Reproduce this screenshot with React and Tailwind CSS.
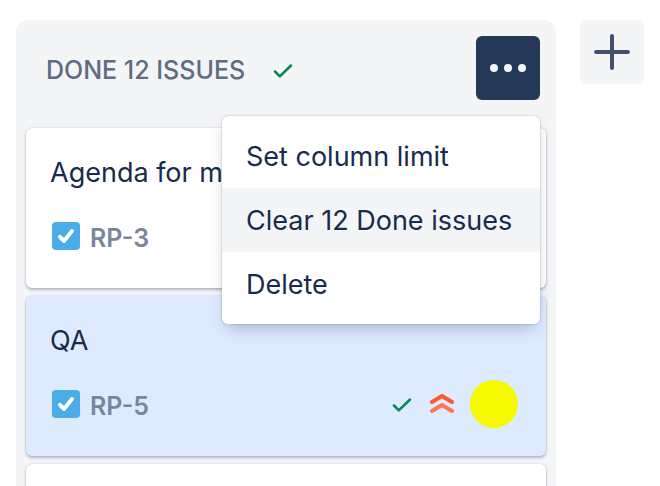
import clsx from 'clsx';

const ISSUES = [
  { key: 'RP-3', title: 'Agenda for m' },
  { key: 'RP-5', title: 'QA', selected: true, done: true },
];

const MENU_ITEMS = [
  { label: 'Set column limit' },
  { label: 'Clear 12 Done issues', active: true },
  { label: 'Delete' },
];

const CARD = 'rounded-md shadow-[0_2px_3px_rgba(9,30,66,0.25),0_0_2px_rgba(9,30,66,0.2)]';

function DoneIcon() {
  return (
    <svg width="20" height="18" viewBox="0 0 20 18" fill="none" aria-hidden="true" className="shrink-0">
      <path d="M2 10.5 6.8 15.3 18 4.5" stroke="#00875A" strokeWidth="2.5" strokeLinecap="round" strokeLinejoin="round" />
    </svg>
  );
}

function TaskIcon() {
  return (
    <svg width="28" height="28" viewBox="0 0 28 28" fill="none" aria-hidden="true" className="shrink-0">
      <rect width="28" height="28" rx="4" fill="#4BADE8" />
      <path d="M8 14.8 12 19 20 9" stroke="#fff" strokeWidth="4" strokeLinecap="round" strokeLinejoin="round" />
    </svg>
  );
}

function HighestIcon() {
  return (
    <svg width="24" height="20" viewBox="0 0 24 20" fill="none" aria-hidden="true" className="shrink-0">
      <path d="M2 8 12 2 22 8" stroke="#FF5630" strokeWidth="4" strokeLinecap="round" strokeLinejoin="round" />
      <path d="M2 17 12 11 22 17" stroke="#FF7452" strokeWidth="4" strokeLinecap="round" strokeLinejoin="round" />
    </svg>
  );
}

function ColumnMenu() {
  return (
    <div className="relative ml-auto shrink-0">
      <button type="button" aria-label="Column actions" aria-haspopup="menu" className="flex size-16 items-center justify-center rounded-md bg-[#253858]">
        <svg width="36" height="8" viewBox="0 0 36 8" fill="#F4F5F7" aria-hidden="true">
          <circle cx="4" cy="4" r="4" />
          <circle cx="18" cy="4" r="4" />
          <circle cx="32" cy="4" r="4" />
        </svg>
      </button>
      <div role="menu" className="absolute top-full right-0 z-10 mt-4 w-[318px] rounded-md bg-white py-2 shadow-[0_8px_16px_-4px_rgba(9,30,66,0.25),0_0_2px_rgba(9,30,66,0.31)]">
        {MENU_ITEMS.map((item) => (
          <button
            key={item.label}
            type="button"
            role="menuitem"
            className={clsx('block h-16 w-full px-6 pt-0.5 text-left text-[27px] whitespace-nowrap hover:bg-[#F4F5F7]', item.active && 'bg-[#F4F5F7]')}
          >
            {item.label}
          </button>
        ))}
      </div>
    </div>
  );
}

function IssueCard({ issue }) {
  return (
    <li className={clsx(CARD, 'px-6 pt-6 pb-7', issue.selected ? 'bg-[#DEEBFF]' : 'bg-white')}>
      <p className="text-[27px] leading-[42px]">{issue.title}</p>
      <div className="mt-[18px] flex h-12 items-center pr-1 pl-0.5">
        <TaskIcon />
        <span className="ml-2.5 pt-1 text-[25px] leading-8 font-semibold text-[#7A869A]">{issue.key}</span>
        {issue.done && (
          <div className="ml-auto flex items-center">
            <DoneIcon />
            <div className="ml-[18px] flex items-center gap-4">
              <HighestIcon />
              <span role="img" aria-label="Assignee" className="size-12 rounded-full bg-[#F5F900]" />
            </div>
          </div>
        )}
      </div>
    </li>
  );
}

export default function App() {
  return (
    <main className="flex h-screen items-start gap-6 overflow-hidden bg-white px-4 pt-5 font-['Inter','Liberation_Sans',sans-serif] text-[#172B4D]">
      <section className="min-w-0 flex-1 rounded-xl bg-[#F4F5F7] px-2.5 pb-2.5">
        <header className="flex items-center pt-4 pr-1.5 pb-7 pl-5">
          <div className="flex items-center gap-7 pt-1">
            <h2 className="text-[25px] leading-8 font-medium text-[#5E6C84]">DONE 12 ISSUES</h2>
            <DoneIcon />
          </div>
          <ColumnMenu />
        </header>
        <ul className="flex flex-col gap-2">
          {ISSUES.map((issue) => (
            <IssueCard key={issue.key} issue={issue} />
          ))}
          {/* next card, still empty */}
          <li className={clsx(CARD, 'h-40 bg-white')} />
        </ul>
      </section>
      <button type="button" aria-label="Add column" className="flex size-16 shrink-0 items-center justify-center rounded-md bg-[#F4F5F7]">
        <svg width="36" height="36" viewBox="0 0 36 36" fill="none" aria-hidden="true">
          <path d="M18 2v32M2 18h32" stroke="#42526E" strokeWidth="4" strokeLinecap="round" />
        </svg>
      </button>
    </main>
  );
}
